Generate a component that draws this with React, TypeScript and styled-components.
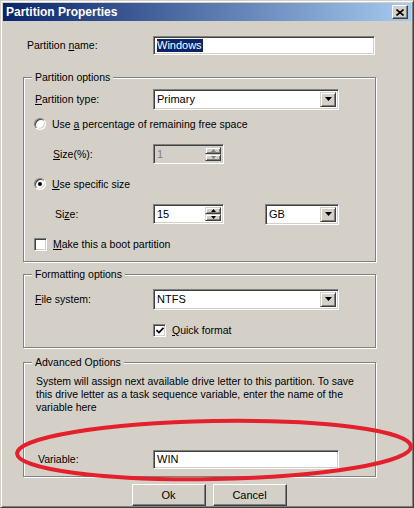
import React from 'react';
import styled, { createGlobalStyle } from 'styled-components';

const GlobalStyle = createGlobalStyle`
  html, body {
    margin: 0;
    padding: 0;
    background: #d4d0c8;
  }
  body {
    font-family: "Liberation Sans", Arial, sans-serif;
    font-size: 10.5px;
    color: #000;
  }
`;

const Window = styled.div`
  position: relative;
  width: 414px;
  height: 508px;
  box-sizing: border-box;
  background: #d4d0c8;
  border: 1px solid;
  border-color: #d4d0c8 #404040 #404040 #d4d0c8;
  box-shadow: inset 1px 1px 0 #fff, inset -1px -1px 0 #808080;
  padding: 2px;
  display: flex;
  flex-direction: column;
`;

const TitleBar = styled.div`
  height: 18px;
  flex: none;
  display: flex;
  align-items: center;
  justify-content: space-between;
  padding: 0 3px 0 3px;
  background: linear-gradient(to right, #0a246a, #a6caf0);
`;

const Title = styled.span`
  color: #fff;
  font-weight: bold;
  font-size: 12px;
`;

const CloseButton = styled.div`
  width: 16px;
  height: 14px;
  box-sizing: border-box;
  display: flex;
  align-items: center;
  justify-content: center;
  background: #d4d0c8;
  border: 1px solid;
  border-color: #fff #404040 #404040 #fff;
  box-shadow: inset -1px -1px 0 #808080;
`;

const Body = styled.div`
  display: flex;
  flex-direction: column;
  padding: 14px 35px 0 20px;
`;

const Row = styled.div<{ $top?: number; $indent?: number }>`
  display: flex;
  align-items: center;
  height: 20px;
  margin-top: ${({ $top }) => $top ?? 0}px;
  padding-left: ${({ $indent }) => $indent ?? 0}px;
`;

const Label = styled.span<{ $width: number }>`
  width: ${({ $width }) => $width}px;
  flex: none;
  white-space: nowrap;
`;

const Sunken = styled.div<{ $width: number; $height?: number; $disabled?: boolean }>`
  position: relative;
  width: ${({ $width }) => $width}px;
  height: ${({ $height }) => $height ?? 20}px;
  box-sizing: border-box;
  flex: none;
  display: flex;
  align-items: center;
  background: ${({ $disabled }) => ($disabled ? '#d4d0c8' : '#fff')};
  color: ${({ $disabled }) => ($disabled ? '#808080' : '#000')};
  border: 1px solid;
  border-color: #808080 #fff #fff #808080;
  box-shadow: inset 1px 1px 0 #404040, inset -1px -1px 0 #d4d0c8;
  padding: 2px 2px 2px 3px;
  font-size: 11px;
`;

const FieldText = styled.span`
  flex: 1;
  white-space: nowrap;
`;

const Selected = styled.span`
  background: #0a246a;
  color: #fff;
  padding: 0 1px 1px 0;
`;

const DropButton = styled.div`
  width: 16px;
  height: 100%;
  box-sizing: border-box;
  flex: none;
  display: flex;
  align-items: center;
  justify-content: center;
  background: #d4d0c8;
  border: 1px solid;
  border-color: #d4d0c8 #404040 #404040 #d4d0c8;
  box-shadow: inset 1px 1px 0 #fff, inset -1px -1px 0 #808080;
`;

const SpinColumn = styled.div`
  width: 16px;
  height: 100%;
  flex: none;
  display: flex;
  flex-direction: column;
`;

const SpinButton = styled.div`
  flex: 1;
  box-sizing: border-box;
  display: flex;
  align-items: center;
  justify-content: center;
  background: #d4d0c8;
  border: 1px solid;
  border-color: #d4d0c8 #404040 #404040 #d4d0c8;
  box-shadow: inset 1px 1px 0 #fff, inset -1px -1px 0 #808080;
`;

const GroupBox = styled.div<{ $top: number; $padTop: number }>`
  position: relative;
  margin-top: ${({ $top }) => $top}px;
  border: 1px solid #808080;
  box-shadow: inset 1px 1px 0 #fff, 1px 1px 0 #fff;
  padding: ${({ $padTop }) => $padTop}px 35px 7px 11px;
  display: flex;
  flex-direction: column;
`;

const Legend = styled.span`
  position: absolute;
  top: -7px;
  left: 8px;
  padding: 0 3px;
  line-height: 13px;
  background: #d4d0c8;
`;

const Radio = styled.span<{ $checked?: boolean }>`
  position: relative;
  width: 12px;
  height: 12px;
  box-sizing: border-box;
  flex: none;
  margin-left: -1px;
  margin-right: 6px;
  border-radius: 50%;
  background: #fff;
  border: 1px solid;
  border-color: #808080 #fff #fff #808080;
  box-shadow: inset 1px 1px 0 #404040, inset -1px -1px 0 #d4d0c8;

  &::after {
    content: '';
    display: ${({ $checked }) => ($checked ? 'block' : 'none')};
    position: absolute;
    left: 3px;
    top: 3px;
    width: 4px;
    height: 4px;
    border-radius: 50%;
    background: #000;
  }
`;

const Check = styled.span`
  width: 13px;
  height: 13px;
  box-sizing: border-box;
  flex: none;
  margin-left: -1px;
  margin-right: 6px;
  display: flex;
  align-items: center;
  justify-content: center;
  background: #fff;
  border: 1px solid;
  border-color: #808080 #fff #fff #808080;
  box-shadow: inset 1px 1px 0 #404040, inset -1px -1px 0 #d4d0c8;
`;

const Note = styled.div`
  line-height: 13px;
  white-space: nowrap;
  padding-left: 1px;
`;

const ButtonRow = styled.div`
  display: flex;
  justify-content: center;
  gap: 7px;
  margin-top: 7px;
  padding-left: 19px;
`;

const Button = styled.button`
  width: 74px;
  height: 22px;
  box-sizing: border-box;
  padding: 0;
  font-family: "Liberation Sans", Arial, sans-serif;
  font-size: 11px;
  color: #000;
  background: #d4d0c8;
  border: 1px solid;
  border-color: #fff #404040 #404040 #fff;
  box-shadow: inset -1px -1px 0 #808080, inset 1px 1px 0 #d4d0c8;
`;

const Overlay = styled.svg`
  position: absolute;
  left: -1px;
  top: -1px;
  pointer-events: none;
`;

const DownArrow = ({ color = '#000' }: { color?: string }) => (
  <svg width="7" height="4" viewBox="0 0 7 4">
    <polygon points="0,0 7,0 3.5,4" fill={color} />
  </svg>
);

const SmallArrow = ({ up, disabled }: { up?: boolean; disabled?: boolean }) => (
  <svg width="5" height="3" viewBox="0 0 5 3">
    <polygon points={up ? '0,3 5,3 2.5,0' : '0,0 5,0 2.5,3'} fill={disabled ? '#808080' : '#000'} />
  </svg>
);

const Select = ({ width, value }: { width: number; value: string }) => (
  <Sunken $width={width} $height={21}>
    <FieldText>{value}</FieldText>
    <DropButton>
      <DownArrow />
    </DropButton>
  </Sunken>
);

const Spinner = ({ value, disabled }: { value: string; disabled?: boolean }) => (
  <Sunken $width={71} $disabled={disabled}>
    <FieldText>{value}</FieldText>
    <SpinColumn>
      <SpinButton>
        <SmallArrow up disabled={disabled} />
      </SpinButton>
      <SpinButton>
        <SmallArrow disabled={disabled} />
      </SpinButton>
    </SpinColumn>
  </Sunken>
);

export default function App() {
  return (
    <>
      <GlobalStyle />
      <Window>
        <TitleBar>
          <Title>Partition Properties</Title>
          <CloseButton>
            <svg width="8" height="7" viewBox="0 0 8 7">
              <path d="M0.5 0.5 L7.5 6.5 M7.5 0.5 L0.5 6.5" stroke="#000" strokeWidth="1.6" />
            </svg>
          </CloseButton>
        </TitleBar>
        <Body>
          <Row $indent={4}>
            <Label $width={126}>
              Partition <u>n</u>ame:
            </Label>
            <Sunken $width={222} $height={19}>
              <FieldText>
                <Selected>Windows</Selected>
              </FieldText>
            </Sunken>
          </Row>

          <GroupBox $top={22} $padTop={11}>
            <Legend>Partition options</Legend>
            <Row>
              <Label $width={118}>
                <u>P</u>artition type:
              </Label>
              <Select width={186} value="Primary" />
            </Row>
            <Row $top={5}>
              <Radio />
              <span>
                Use <u>a</u> percentage of remaining free space
              </span>
            </Row>
            <Row $top={10} $indent={18}>
              <Label $width={100}>
                <u>S</u>ize(%):
              </Label>
              <Spinner value="1" disabled />
            </Row>
            <Row $top={10}>
              <Radio $checked />
              <span>
                <u>U</u>se specific size
              </span>
            </Row>
            <Row $top={10} $indent={20}>
              <Label $width={98}>
                Si<u>z</u>e:
              </Label>
              <Spinner value="15" />
              <Label $width={41} />
              <Select width={74} value="GB" />
            </Row>
            <Row $top={10}>
              <Check />
              <span>
                <u>M</u>ake this a boot partition
              </span>
            </Row>
          </GroupBox>

          <GroupBox $top={12} $padTop={14}>
            <Legend>Formatting options</Legend>
            <Row>
              <Label $width={118}>
                <u>F</u>ile system:
              </Label>
              <Select width={186} value="NTFS" />
            </Row>
            <Row $top={11} $indent={119}>
              <Check>
                <svg width="8" height="7" viewBox="0 0 8 7">
                  <path d="M0.5 3 L3 5.5 L7.5 0.8" stroke="#000" strokeWidth="1.7" fill="none" />
                </svg>
              </Check>
              <span>
                <u>Q</u>uick format
              </span>
            </Row>
          </GroupBox>

          <GroupBox $top={14} $padTop={12}>
            <Legend>Advanced Options</Legend>
            <Note>
              System will assign next available drive letter to this partition. To save
              <br />
              this drive letter as a task sequence variable, enter the name of the
              <br />
              variable here
            </Note>
            <Row $top={35}>
              <Label $width={118}>&nbsp;Variable:</Label>
              <Sunken $width={186} $height={19}>
                <FieldText>WIN</FieldText>
              </Sunken>
            </Row>
          </GroupBox>

          <ButtonRow>
            <Button>Ok</Button>
            <Button>Cancel</Button>
          </ButtonRow>
        </Body>

        <Overlay width="414" height="508" viewBox="0 0 414 508">
          <ellipse
            cx="214"
            cy="450"
            rx="197"
            ry="29"
            transform="rotate(-1 214 450)"
            fill="none"
            stroke="#e3202b"
            strokeWidth="4"
          />
        </Overlay>
      </Window>
    </>
  );
}
